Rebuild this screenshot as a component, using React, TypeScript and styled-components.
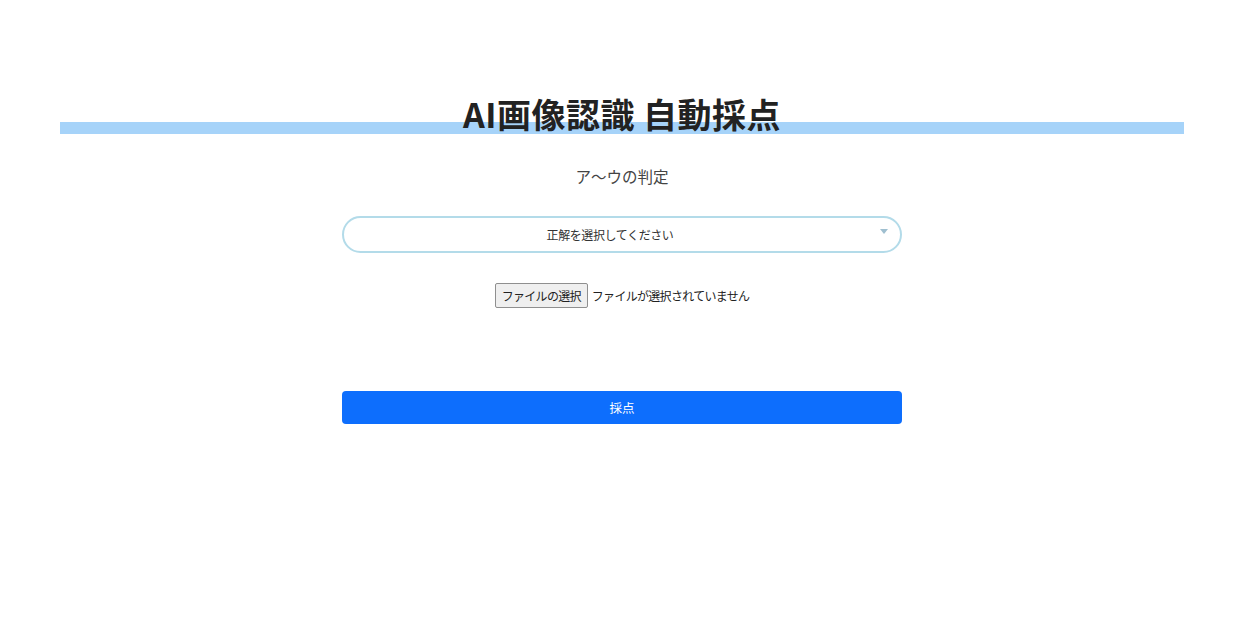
import React from "react";
import styled, { createGlobalStyle } from "styled-components";

const GlobalStyle = createGlobalStyle`
  html, body {
    margin: 0;
    padding: 0;
    background: #ffffff;
    font-family: "Noto Sans CJK JP", "Noto Sans", sans-serif;
    color: #333;
  }
`;

const Page = styled.main`
  display: flex;
  flex-direction: column;
  align-items: center;
  padding-top: 90px;
  padding-right: 4px;
  min-height: 623px;
  box-sizing: border-box;
`;

const Title = styled.h1`
  width: 90.4%;
  margin: 0;
  text-align: center;
  font-size: 34px;
  line-height: 48px;
  font-weight: 700;
  color: #222;
  letter-spacing: 0.5px;
  background: linear-gradient(
    to bottom,
    transparent 0,
    transparent 32px,
    #a6d3f9 32px,
    #a6d3f9 44px,
    transparent 44px
  );
`;

const Subtitle = styled.p`
  margin: 26px 0 0;
  font-size: 15.5px;
  line-height: 24px;
  color: #444;
`;

const Form = styled.form`
  width: 45%;
  display: flex;
  flex-direction: column;
  align-items: center;
`;

const SelectWrap = styled.div`
  position: relative;
  width: 100%;
  margin-top: 28px;
`;

const Select = styled.div`
  box-sizing: border-box;
  width: 100%;
  height: 37px;
  padding-right: 24px;
  border: 2px solid #b3dbe9;
  border-radius: 19px;
  display: flex;
  align-items: center;
  justify-content: center;
  font-size: 12px;
  letter-spacing: -0.4px;
  color: #333;
  background: #fff;
`;

const Caret = styled.span`
  position: absolute;
  right: 14px;
  top: 13px;
  width: 0;
  height: 0;
  border-left: 4px solid transparent;
  border-right: 4px solid transparent;
  border-top: 5px solid #9fbfd0;
`;

const FileRow = styled.div`
  margin-top: 30px;
  display: flex;
  align-items: center;
  gap: 4px;
  font-size: 12px;
  letter-spacing: -0.7px;
  color: #222;
`;

const FileButton = styled.button`
  box-sizing: border-box;
  height: 25px;
  padding: 0 6px;
  background: #efefef;
  border: 1px solid #8f8f8f;
  border-radius: 2px;
  font-family: inherit;
  font-size: 12px;
  letter-spacing: -0.7px;
  color: #222;
`;

const Submit = styled.button`
  margin-top: 83px;
  width: 100%;
  height: 33px;
  border: none;
  border-radius: 4px;
  background: #0d6efd;
  color: #fff;
  font-family: inherit;
  font-size: 12.5px;
`;

export default function App() {
  return (
    <>
      <GlobalStyle />
      <Page>
        <Title>AI画像認識 自動採点</Title>
        <Subtitle>ア〜ウの判定</Subtitle>
        <Form onSubmit={(e) => e.preventDefault()}>
          <SelectWrap>
            <Select>正解を選択してください</Select>
            <Caret />
          </SelectWrap>
          <FileRow>
            <FileButton type="button">ファイルの選択</FileButton>
            <span>ファイルが選択されていません</span>
          </FileRow>
          <Submit type="submit">採点</Submit>
        </Form>
      </Page>
    </>
  );
}
